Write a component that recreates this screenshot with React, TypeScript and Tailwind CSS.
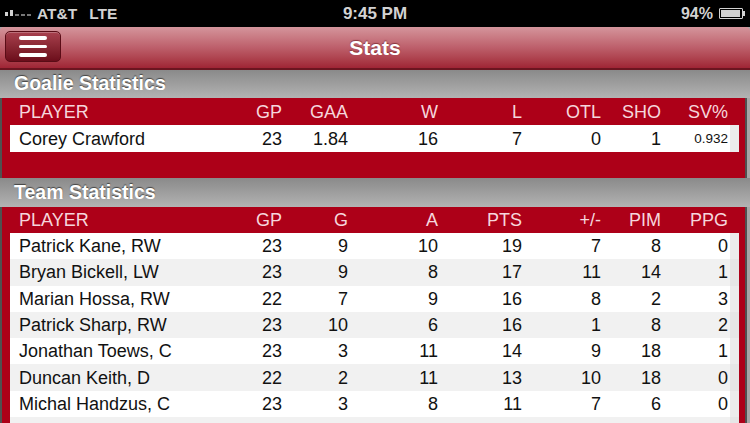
import React from "react";

const goalieCols = ["GP", "GAA", "W", "L", "OTL", "SHO", "SV%"];
const teamCols = ["GP", "G", "A", "PTS", "+/-", "PIM", "PPG"];

const team: (string | number)[][] = [
  ["Patrick Kane, RW", 23, 9, 10, 19, 7, 8, 0],
  ["Bryan Bickell, LW", 23, 9, 8, 17, 11, 14, 1],
  ["Marian Hossa, RW", 22, 7, 9, 16, 8, 2, 3],
  ["Patrick Sharp, RW", 23, 10, 6, 16, 1, 8, 2],
  ["Jonathan Toews, C", 23, 3, 11, 14, 9, 18, 1],
  ["Duncan Keith, D", 22, 2, 11, 13, 10, 18, 0],
  ["Michal Handzus, C", 23, 3, 8, 11, 7, 6, 0],
  ["", "", "", "", "", "", "", ""],
];

const grid =
  "grid w-[720px] grid-cols-[222px_50px_66px_90px_84px_79px_60px_67px_2px] items-center";

function HeaderRow({ cols }: { cols: string[] }) {
  return (
    <div className="flex h-[27px] items-center pl-[8px]">
      <div className={grid + " text-[18px] leading-none text-[#f6d6dc]"}>
        <div className="pl-[9px]">PLAYER</div>
        {cols.map((c) => (
          <div key={c} className="text-right">
            {c}
          </div>
        ))}
        <div />
      </div>
    </div>
  );
}

function DataRow({
  cells,
  alt,
  smallLast,
  h,
}: {
  cells: (string | number)[];
  alt: boolean;
  smallLast?: boolean;
  h: string;
}) {
  return (
    <div className={"ml-[8px] flex w-[729px] " + h}>
      <div
        className={
          grid +
          " h-full text-[18px] leading-none text-[#111] " +
          (alt ? "bg-[#f1f1f1]" : "bg-white")
        }
      >
        <div className="pl-[9px]">{cells[0]}</div>
        {cells.slice(1).map((c, i) => (
          <div
            key={i}
            className={
              "text-right " +
              (smallLast && i === cells.length - 2 ? "text-[13.5px]" : "")
            }
          >
            {c}
          </div>
        ))}
        <div />
      </div>
      <div className={"w-[9px] h-full " + (alt ? "bg-[#e6e6e6]" : "bg-[#ececec]")} />
    </div>
  );
}

function SectionHeader({ title, h }: { title: string; h: string }) {
  return (
    <div
      className={
        "flex items-center bg-gradient-to-b from-[#8a8a8a] to-[#b3b3b3] pl-[14px] " + h
      }
    >
      <span className="text-[19.5px] font-bold leading-none text-white [text-shadow:0_-1px_1px_rgba(0,0,0,0.55)]">
        {title}
      </span>
    </div>
  );
}

export default function App() {
  return (
    <div
      className="relative h-[423px] w-[750px] overflow-hidden bg-[#a6a6a6]"
      style={{ fontFamily: '"Liberation Sans", Arial, sans-serif' }}
    >
      {/* Status bar */}
      <div className="relative flex h-[27px] items-center bg-black text-[16px] font-bold text-[#d2d2d2]">
        <div className="ml-[5px] flex items-end gap-[2px] pb-[1px]">
          <div className="h-[4px] w-[3px] bg-[#d2d2d2]" />
          <div className="h-[6px] w-[3px] bg-[#d2d2d2]" />
          <div className="h-[2px] w-[4px] bg-[#777]" />
          <div className="h-[2px] w-[4px] bg-[#777]" />
          <div className="h-[2px] w-[4px] bg-[#777]" />
        </div>
        <span className="ml-[6px] text-[15.5px]">AT&amp;T</span>
        <span className="ml-[12px] text-[15.5px]">LTE</span>
        <span className="absolute left-1/2 -translate-x-1/2 text-[17px]">9:45 PM</span>
        <div className="ml-auto mr-[5px] flex items-center">
          <span className="text-[16px]">94%</span>
          <div className="ml-[6px] flex items-center">
            <div className="flex h-[11px] w-[24px] items-center rounded-[1px] border border-[#d2d2d2] p-[1px]">
              <div className="h-full w-[94%] bg-[#d2d2d2]" />
            </div>
            <div className="h-[5px] w-[2px] bg-[#d2d2d2]" />
          </div>
        </div>
      </div>

      {/* Nav bar */}
      <div className="relative flex h-[43px] items-center justify-center rounded-t-[4px] border-b-2 border-[#6b1520] bg-gradient-to-b from-[#d4959c] via-[#bd5f6b] to-[#9f2435]">
        <div className="absolute left-[5px] top-[4px] flex h-[31px] w-[56px] flex-col items-center justify-center gap-[5px] rounded-[5px] border border-[#5a0c16] bg-gradient-to-b from-[#a8404e] to-[#6c0d1b] shadow-[inset_0_1px_0_rgba(255,255,255,0.25)]">
          <div className="h-[3.5px] w-[28px] rounded-full bg-white" />
          <div className="h-[3.5px] w-[28px] rounded-full bg-white" />
          <div className="h-[3.5px] w-[28px] rounded-full bg-white" />
        </div>
        <span className="text-[21px] font-bold leading-none text-white [text-shadow:0_-1px_1px_rgba(80,0,10,0.5)]">
          Stats
        </span>
      </div>

      {/* Goalie */}
      <SectionHeader title="Goalie Statistics" h="h-[28px]" />
      <div className="h-[80px] w-[747px] border-l-2 border-r-2 border-[#505050] bg-[#ad0018]">
        <HeaderRow cols={goalieCols} />
        <DataRow
          cells={["Corey Crawford", 23, "1.84", 16, 7, 0, 1, "0.932"]}
          alt={false}
          smallLast
          h="h-[27px]"
        />
      </div>

      {/* Team */}
      <SectionHeader title="Team Statistics" h="h-[29px]" />
      <div className="h-[300px] w-[747px] border-l-2 border-r-2 border-[#505050] bg-[#ad0018]">
        <div className="h-[26px] [&>div]:h-[26px]">
          <HeaderRow cols={teamCols} />
        </div>
        {team.map((r, i) => (
          <DataRow key={i} cells={r} alt={i % 2 === 1} h="h-[26.3px]" />
        ))}
      </div>
    </div>
  );
}
